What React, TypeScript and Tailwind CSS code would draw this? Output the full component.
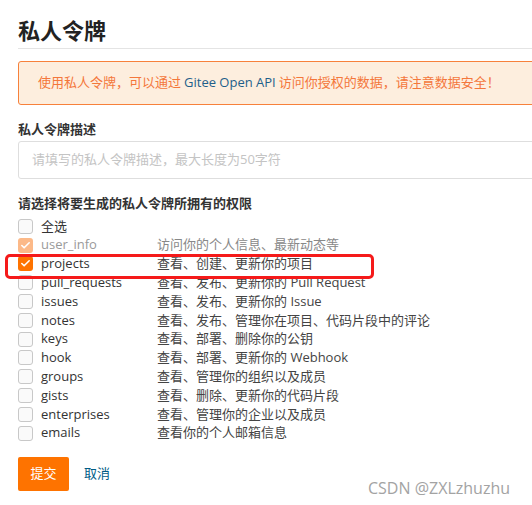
import { Check } from "lucide-react";

const perms = [
  { key: "user_info", desc: "访问你的个人信息、最新动态等", checked: true, disabled: true },
  { key: "projects", desc: "查看、创建、更新你的项目", checked: true },
  { key: "pull_requests", desc: "查看、发布、更新你的 Pull Request" },
  { key: "issues", desc: "查看、发布、更新你的 Issue" },
  { key: "notes", desc: "查看、发布、管理你在项目、代码片段中的评论" },
  { key: "keys", desc: "查看、部署、删除你的公钥" },
  { key: "hook", desc: "查看、部署、更新你的 Webhook" },
  { key: "groups", desc: "查看、管理你的组织以及成员" },
  { key: "gists", desc: "查看、删除、更新你的代码片段" },
  { key: "enterprises", desc: "查看、管理你的企业以及成员" },
  { key: "emails", desc: "查看你的个人邮箱信息" },
];

const Box = ({ checked, disabled }: { checked?: boolean; disabled?: boolean }) => {
  if (checked) {
    return (
      <span
        className={`flex h-[15px] w-[15px] items-center justify-center rounded-[3px] ${
          disabled ? "bg-[#fcb988]" : "bg-[#fe7300]"
        }`}
      >
        <Check size={11} strokeWidth={3.5} color="#fff" />
      </span>
    );
  }
  return <span className="h-[15px] w-[15px] rounded-[3px] border border-[#c8c8c8] bg-[#fafafa]" />;
};

export default function App() {
  return (
    <div className="relative h-[505px] w-[532px] overflow-hidden bg-white font-['Open_Sans','Noto_Sans_CJK_SC',sans-serif] text-[13px] text-[#333]">
      <div className="w-[580px] pl-[18px] pt-[16px]">
        <h1 className="pb-[4px] text-[22px] font-bold leading-[28px] text-[#222]">私人令牌</h1>
        <div className="h-px bg-[#e4e4e4]" />

        <div className="mt-[12px] flex h-[44px] items-center rounded-[3px] border border-[#f7813b] bg-[#fdeede] pl-[19px] text-[#f4773b]">
          使用私人令牌，可以通过 <span className="mx-[3px] text-[#1f5f8a]">Gitee Open API</span> 访问你授权的数据，请注意数据安全！
        </div>

        <div className="mt-[15px] font-bold leading-[18px] text-[#333]">私人令牌描述</div>
        <div className="mt-[3px] flex h-[38px] items-center rounded-[3px] border border-[#dedede] pl-[13px] text-[#c4c4c4]">
          请填写的私人令牌描述，最大长度为50字符
        </div>

        <div className="mt-[15px] font-bold leading-[18px] text-[#333]">请选择将要生成的私人令牌所拥有的权限</div>

        <div className="mt-[5px] flex flex-col">
          <div className="flex h-[18.8px] items-center">
            <Box />
            <span className="ml-[8px] text-[#333]">全选</span>
          </div>
          {perms.map((p) => (
            <div key={p.key} className="flex h-[18.8px] items-center">
              <Box checked={p.checked} disabled={p.disabled} />
              <span className={`ml-[8px] w-[116px] ${p.disabled ? "text-[#9a9a9a]" : "text-[#333]"}`}>{p.key}</span>
              <span className={p.disabled ? "text-[#888]" : "text-[#444]"}>{p.desc}</span>
            </div>
          ))}
        </div>

        <div className="mt-[14px] flex items-center">
          <button className="h-[34px] w-[51px] rounded-[2px] bg-[#fe7300] text-[13px] text-white">提交</button>
          <span className="ml-[15px] text-[#005b86]">取消</span>
        </div>
      </div>

      <div className="pointer-events-none absolute left-[5px] top-[254px] h-[25px] w-[369px] rounded-[5px] border-[3px] border-[#f51a1a]" />
      <div className="absolute left-[368px] top-[476px] text-[16px] text-[#a3a3a3]">CSDN @ZXLzhuzhu</div>
    </div>
  );
}
